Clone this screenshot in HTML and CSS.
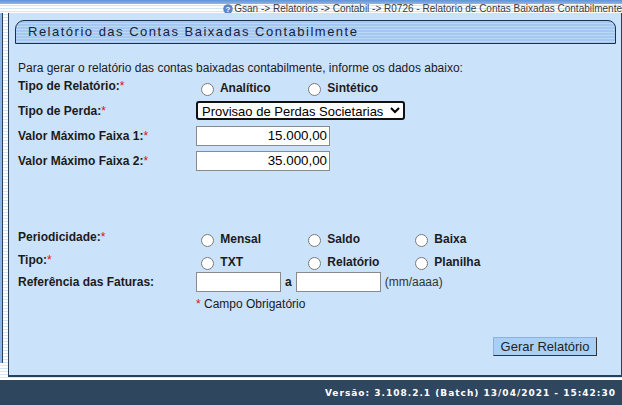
FILE: index.html
```html
<!DOCTYPE html>
<html lang="pt-BR">
<head>
<meta charset="utf-8">
<title>Relatório das Contas Baixadas Contabilmente</title>
<link rel="stylesheet" href="styles.css">
</head>
<body>
<div class="topbar"></div>
<div class="crumbs">
  <svg class="help" width="10" height="10" viewBox="0 0 10 10"><circle cx="5" cy="5" r="4.8" fill="#5b86c4"/><text x="5" y="8.2" text-anchor="middle" font-size="8" font-family="Liberation Sans, Arial, sans-serif" font-weight="bold" fill="#fff">?</text></svg>
  <a href="#">Gsan -&gt; Relatorios -&gt; Contabil -&gt; R0726 - Relatorio de Contas Baixadas Contabilmente</a>
</div>
<div class="main">
  <div class="side"></div>
  <div class="panel">
    <div class="title">Relatório das Contas Baixadas Contabilmente</div>
    <form class="form">
      <p class="intro">Para gerar o relatório das contas baixadas contabilmente, informe os dados abaixo:</p>
      <div class="row radio-row">
        <div class="lbl">Tipo de Relatório:<span class="req">*</span></div>
        <div class="opts">
          <label class="opt"><input type="radio" name="tr"> Analítico</label>
          <label class="opt"><input type="radio" name="tr"> Sintético</label>
        </div>
      </div>
      <div class="row field-row">
        <div class="lbl">Tipo de Perda:<span class="req">*</span></div>
        <select class="sel"><option>Provisao de Perdas Societarias</option></select>
      </div>
      <div class="row field-row">
        <div class="lbl">Valor Máximo Faixa 1:<span class="req">*</span></div>
        <input class="num" type="text" value="15.000,00">
      </div>
      <div class="row field-row">
        <div class="lbl">Valor Máximo Faixa 2:<span class="req">*</span></div>
        <input class="num" type="text" value="35.000,00">
      </div>
      <div class="spacer"></div>
      <div class="row radio-row">
        <div class="lbl">Periodicidade:<span class="req">*</span></div>
        <div class="opts">
          <label class="opt"><input type="radio" name="pe"> Mensal</label>
          <label class="opt"><input type="radio" name="pe"> Saldo</label>
          <label class="opt"><input type="radio" name="pe"> Baixa</label>
        </div>
      </div>
      <div class="row radio-row">
        <div class="lbl">Tipo:<span class="req">*</span></div>
        <div class="opts">
          <label class="opt"><input type="radio" name="ti"> TXT</label>
          <label class="opt"><input type="radio" name="ti"> Relatório</label>
          <label class="opt"><input type="radio" name="ti"> Planilha</label>
        </div>
      </div>
      <div class="row ref-row">
        <div class="lbl">Referência das Faturas:</div>
        <input class="ref" type="text"><span class="a">a</span><input class="ref" type="text"><span class="fmt">(mm/aaaa)</span>
      </div>
      <div class="row note-row">
        <div class="lbl"></div>
        <div class="note"><span class="req">*</span> Campo Obrigatório</div>
      </div>
      <div class="actions">
        <button type="button" class="btn">Gerar Relatório</button>
      </div>
    </form>
  </div>
</div>
<div class="gap"></div>
<div class="footer">Versão: 3.108.2.1 (Batch) 13/04/2021 - 15:42:30</div>
</body>
</html>
```
FILE: styles.css
```css
html, body {
  margin: 0;
  padding: 0;
}
body {
  width: 622px;
  height: 405px;
  overflow: hidden;
  font-family: "Liberation Sans", Arial, sans-serif;
  font-size: 12px;
  color: #1b1b1b;
  background: repeating-linear-gradient(to bottom, #ffffff 0 2px, #d6e5f5 2px 3px);
}
.topbar {
  height: 4px;
  background: linear-gradient(to bottom, #5f93d3, #8db6e6);
}
.crumbs {
  height: 9px;
  display: flex;
  justify-content: flex-end;
  align-items: center;
  gap: 1px;
  font-size: 10px;
  line-height: 9px;
  white-space: nowrap;
}
.crumbs a {
  color: #3a3a3a;
  text-decoration: underline;
}
.help {
  flex: none;
}
.main {
  display: flex;
  height: 364px;
}
.side {
  width: 2px;
  height: 350px;
  background: #8fb6e4;
  border-right: 1px solid #29405a;
  margin-right: 5px;
}
.panel {
  flex: 1;
  background: #cbe2fb;
  border-left: 1px solid #29405a;
  border-right: 1px solid #29405a;
  border-bottom: 2px solid #29405a;
  padding: 7px 5px 0 6px;
  box-sizing: border-box;
}
.title {
  height: 24px;
  box-sizing: border-box;
  border: 1px solid #1d3049;
  border-radius: 9px 8px 0 0;
  background: repeating-linear-gradient(to bottom, #a4c8f1 0 2px, #bcd8f7 2px 3px);
  padding-left: 12px;
  font-size: 13px;
  line-height: 22px;
  letter-spacing: 1.5px;
  color: #15243a;
}
.form {
  margin: 0;
  padding: 17px 0 0 3px;
}
.intro {
  margin: 0;
  line-height: 14px;
}
.row {
  display: flex;
}
.lbl {
  width: 178px;
  flex: none;
  font-weight: bold;
}
.req {
  color: #e01010;
  font-weight: normal;
}
.radio-row {
  height: 23px;
  align-items: flex-start;
  padding-top: 4px;
  box-sizing: border-box;
}
.radio-row .lbl {
  line-height: 14px;
}
.opts {
  display: flex;
  margin-top: 1px;
}
.opt {
  width: 107px;
  font-weight: bold;
  font-size: 12px;
  display: flex;
  align-items: center;
  white-space: pre;
}
.opt input {
  margin: 3px 3px 0 5px;
  width: 13px;
  height: 13px;
}
.field-row {
  height: 25px;
  align-items: center;
}
.sel {
  width: 209px;
  height: 19px;
  box-sizing: border-box;
  border: 2px solid #111;
  border-radius: 3px;
  background: #fff;
  font-family: "Liberation Sans", Arial, sans-serif;
  font-size: 13px;
  padding: 0;
  color: #000;
}
.num, .ref {
  height: 20px;
  box-sizing: border-box;
  border: 1px solid #8a8a8a;
  background: #fff;
  font-family: "Liberation Sans", Arial, sans-serif;
  font-size: 13.33px;
  padding: 0 2px;
  color: #000;
  margin: 0;
}
.num {
  width: 134px;
  text-align: right;
}
.ref {
  width: 85px;
}
.ref-row {
  height: 22px;
  margin-top: -1px;
  align-items: center;
}
.a {
  font-weight: bold;
  margin: 0 4px;
}
.fmt {
  margin-left: 4px;
  color: #333;
}
.spacer {
  height: 53px;
}
.note-row {
  height: 20px;
  margin-top: 1px;
  align-items: center;
}
.note {
  line-height: 14px;
}
.actions {
  display: flex;
  justify-content: flex-end;
  padding: 23px 19px 0 0;
}
.btn {
  width: 104px;
  height: 19px;
  padding: 0;
  border: 1px solid #333;
  border-top-color: #8fb0d8;
  border-left-color: #8fb0d8;
  background: #a8d0f7;
  font-family: "Liberation Sans", Arial, sans-serif;
  font-size: 13px;
  color: #222;
}
.gap {
  height: 3px;
}
.footer {
  height: 25px;
  background: #2f465f;
  color: #fff;
  font-family: "DejaVu Sans", Verdana, sans-serif;
  font-weight: bold;
  font-size: 9px;
  letter-spacing: 1px;
  line-height: 27px;
  text-align: right;
  padding-right: 6px;
}
```
